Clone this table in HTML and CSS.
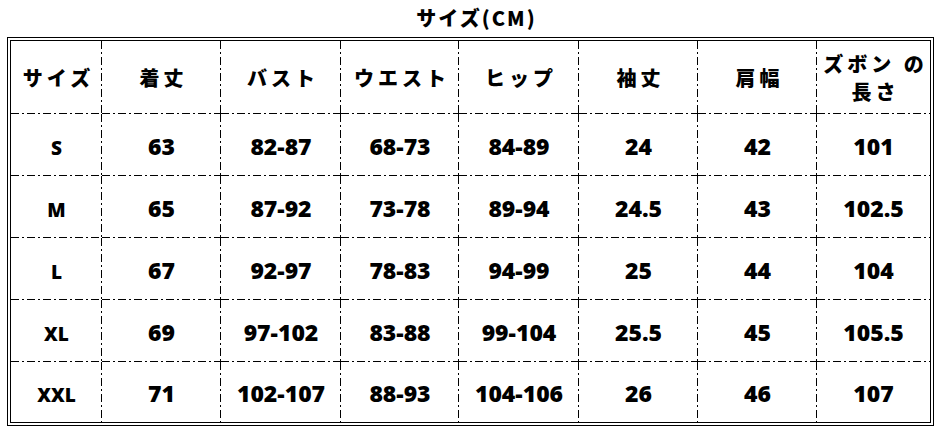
FILE: index.html
```html
<!DOCTYPE html>
<html lang="ja">
<head>
<meta charset="utf-8">
<link rel="stylesheet" href="styles.css">
</head>
<body>
<div class="page">
  <div class="title">サイズ(CM)</div>
  <table class="chart">
    <colgroup>
      <col class="c1"><col class="c2"><col class="c3"><col class="c4"><col class="c5"><col class="c6"><col class="c7"><col class="c8">
    </colgroup>
    <thead>
      <tr class="head">
        <th>サイズ</th><th>着丈</th><th>バスト</th><th>ウエスト</th><th>ヒップ</th><th>袖丈</th><th>肩幅</th><th class="two">ズボン の<br>長さ</th>
      </tr>
    </thead>
    <tbody>
      <tr><td class="sz">S</td><td>63</td><td>82-87</td><td>68-73</td><td>84-89</td><td>24</td><td>42</td><td>101</td></tr>
      <tr><td class="sz">M</td><td>65</td><td>87-92</td><td>73-78</td><td>89-94</td><td>24.5</td><td>43</td><td>102.5</td></tr>
      <tr><td class="sz">L</td><td>67</td><td>92-97</td><td>78-83</td><td>94-99</td><td>25</td><td>44</td><td>104</td></tr>
      <tr><td class="sz">XL</td><td>69</td><td>97-102</td><td>83-88</td><td>99-104</td><td>25.5</td><td>45</td><td>105.5</td></tr>
      <tr class="last"><td class="sz">XXL</td><td>71</td><td>102-107</td><td>88-93</td><td>104-106</td><td>26</td><td>46</td><td>107</td></tr>
    </tbody>
  </table>
</div>
</body>
</html>
```

FILE: styles.css
```css
html, body {
  margin: 0;
  padding: 0;
  background: #fff;
}
body {
  font-family: "Noto Sans CJK JP", "Noto Sans", sans-serif;
  color: #000;
}
.page {
  width: 939px;
  height: 433px;
  padding-left: 7px;
  box-sizing: border-box;
}
.title {
  width: 927px;
  height: 37px;
  line-height: 36px;
  text-align: center;
  font-weight: 900;
  font-size: 20px;
  letter-spacing: 2px;
  padding-left: 12px;
  box-sizing: border-box;
}
.chart {
  width: 927px;
  table-layout: fixed;
  border-collapse: separate;
  border-spacing: 0;
  border: 4px double #000;
}
.c1 { width: 91px; }
.c2 { width: 119px; }
.c3 { width: 120px; }
.c4 { width: 118px; }
.c5 { width: 120px; }
.c6 { width: 119px; }
.c7 { width: 119px; }
.c8 { width: 113px; }
.chart th, .chart td {
  padding: 0;
  text-align: center;
  vertical-align: middle;
  font-weight: 900;
  background-image:
    repeating-linear-gradient(to bottom, #000 0 8px, transparent 8px 11px, #000 11px 13px, transparent 13px 16px),
    repeating-linear-gradient(to right, #000 0 8px, transparent 8px 11px, #000 11px 13px, transparent 13px 16px);
  background-size: 1px 100%, 100% 1px;
  background-position: right top, left bottom;
  background-repeat: no-repeat;
}
.chart th:last-child, .chart td:last-child {
  background-image:
    repeating-linear-gradient(to right, #000 0 8px, transparent 8px 11px, #000 11px 13px, transparent 13px 16px);
  background-size: 100% 1px;
  background-position: left bottom;
}
.chart tr.last td {
  background-image:
    repeating-linear-gradient(to bottom, #000 0 8px, transparent 8px 11px, #000 11px 13px, transparent 13px 16px);
  background-size: 1px 100%;
  background-position: right top;
}
.chart tr.last td:last-child {
  background-image: none;
}
.head th {
  height: 73px;
  font-size: 20px;
  letter-spacing: 4px;
  line-height: 28px;
  padding-left: 4px;
}
.chart td {
  height: 62px;
  font-family: "Noto Sans", sans-serif;
  font-size: 23px;
  padding-top: 1px;
  box-sizing: border-box;
}
.chart tr.last td {
  height: 60px;
}
.chart td.sz {
  font-size: 19px;
  padding-top: 5px;
}
```
